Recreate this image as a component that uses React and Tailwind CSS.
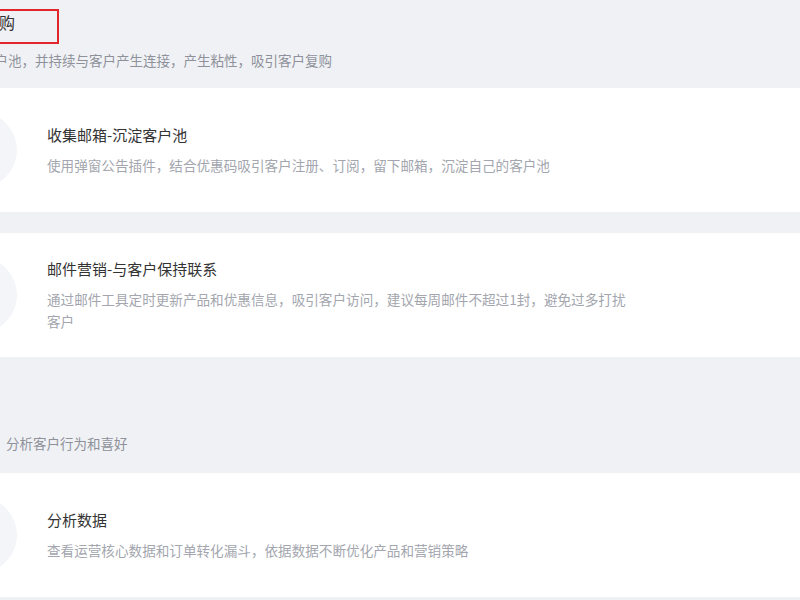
import React from "react";

const tasks = [
  {
    title: "收集邮箱-沉淀客户池",
    desc: "使用弹窗公告插件，结合优惠码吸引客户注册、订阅，留下邮箱，沉淀自己的客户池",
  },
  {
    title: "邮件营销-与客户保持联系",
    desc: "通过邮件工具定时更新产品和优惠信息，吸引客户访问，建议每周邮件不超过1封，避免过多打扰客户",
  },
];

const TaskCard = ({ title, desc }) => (
  <div className="h-[124px] bg-white flex items-center">
    <div className="w-[76px] h-[76px] rounded-full bg-[#f4f5f8] shrink-0 -ml-[13px]" />
    <div className="ml-[30px] max-w-[590px]">
      <div className="text-[15px] leading-[22px] text-[#333333] mb-2">{title}</div>
      <div className="text-[13.6px] leading-[22px] text-[#a3a6ae]">{desc}</div>
    </div>
  </div>
);

export default function App() {
  return (
    <div
      className="relative w-[800px] h-[600px] overflow-hidden bg-[#f0f1f5]"
      style={{ fontFamily: '"Noto Sans CJK SC", "Noto Sans", sans-serif' }}
    >
      <div className="-ml-[46px]">
        {/* section: repeat purchase */}
        <div className="h-[88px] pt-[10px]">
          <div className="-ml-[3px] text-[16px] leading-[24px] text-[#333333] whitespace-nowrap">促进复购</div>
          <div className="mt-4 text-[13.5px] leading-[20px] text-[#8e919a] whitespace-nowrap">
            沉淀客户池，并持续与客户产生连接，产生粘性，吸引客户复购
          </div>
        </div>
        <div className="flex flex-col gap-[21px]">
          {tasks.map((t) => (
            <TaskCard key={t.title} {...t} />
          ))}
        </div>

        {/* section: data */}
        <div className="mt-[26px] h-[90px] pt-[10px]">
          <div className="h-[24px]" />
          <div className="mt-4 ml-[52px] text-[13.5px] leading-[20px] text-[#8e919a] whitespace-nowrap">
            分析客户行为和喜好
          </div>
        </div>
        <TaskCard
          title="分析数据"
          desc="查看运营核心数据和订单转化漏斗，依据数据不断优化产品和营销策略"
        />
      </div>

      {/* annotation box round the heading */}
      <div className="absolute -left-[60px] top-[9px] w-[119px] h-[35px] border-2 border-[#e3262b]" />
    </div>
  );
}
